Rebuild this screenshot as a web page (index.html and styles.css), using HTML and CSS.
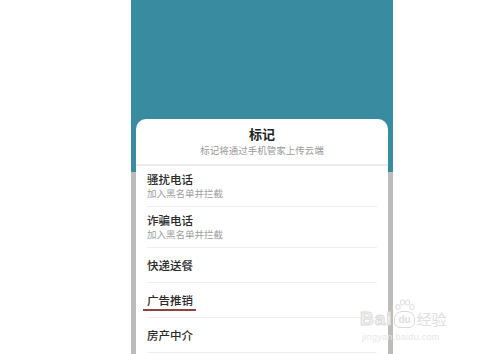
FILE: index.html
```html
<!DOCTYPE html>
<html lang="zh">
<head>
<meta charset="utf-8">
<link rel="stylesheet" href="styles.css">
</head>
<body>
<div class="page">
  <div class="phone">
    <div class="dialog">
      <div class="header">
        <div class="title">标记</div>
        <div class="subtitle">标记将通过手机管家上传云端</div>
      </div>
      <ul class="list">
        <li class="item two">
          <div class="name">骚扰电话</div>
          <div class="desc">加入黑名单并拦截</div>
        </li>
        <li class="item two">
          <div class="name">诈骗电话</div>
          <div class="desc">加入黑名单并拦截</div>
        </li>
        <li class="item one">
          <div class="name">快递送餐</div>
        </li>
        <li class="item one">
          <div class="name"><span class="marked">广告推销</span></div>
        </li>
        <li class="item one">
          <div class="name">房产中介</div>
        </li>
      </ul>
    </div>
  </div>
  <div class="watermark">
    <div class="wm-top">
      <span class="wm-bai">Bai</span>
      <span class="wm-paw">
        <svg class="wm-toes" width="22" height="12" viewBox="0 0 22 12">
          <g fill="none" stroke="#dcdcdc" stroke-width="1">
            <ellipse cx="4" cy="8" rx="2.2" ry="2.6"/>
            <ellipse cx="8.5" cy="3.5" rx="2.2" ry="2.6"/>
            <ellipse cx="13.5" cy="3.5" rx="2.2" ry="2.6"/>
            <ellipse cx="18" cy="8" rx="2.2" ry="2.6"/>
          </g>
        </svg>
        <span class="wm-du">du</span>
      </span>
      <span class="wm-cn">经验</span>
    </div>
    <div class="wm-url">jingyan.baidu.com</div>
  </div>
</div>
</body>
</html>
```
FILE: styles.css
```css
html, body {
  margin: 0;
  padding: 0;
  background: #ffffff;
  font-family: "Noto Sans CJK SC", "Noto Sans", sans-serif;
}
.page {
  position: relative;
  width: 479px;
  height: 354px;
  overflow: hidden;
}
.phone {
  margin-left: 131px;
  width: 262px;
  height: 354px;
  background: linear-gradient(to bottom, #398c9f 0, #398c9f 172px, #bcbcbc 172px, #bcbcbc 100%);
  padding-top: 119px;
  box-sizing: border-box;
  overflow: hidden;
}
.dialog {
  margin: 0 5px;
  background: #ffffff;
  border-radius: 10px 10px 0 0;
  height: 260px;
}
.header {
  padding: 6px 0 7px;
  text-align: center;
  border-bottom: 2px solid #ececec;
}
.title {
  font-size: 13px;
  line-height: 17px;
  font-weight: 700;
  color: #222;
}
.subtitle {
  margin-top: 2px;
  font-size: 9.5px;
  line-height: 13px;
  color: #9a9a9a;
}
.list {
  list-style: none;
  margin: 0;
  padding: 0;
}
.item {
  margin: 0 11px;
  border-bottom: 1px solid #efefef;
}
.item.two {
  padding: 6px 0 6px;
}
.item.one {
  padding: 10px 0 9px;
}
.name {
  font-size: 11.5px;
  line-height: 15px;
  font-weight: 500;
  color: #2a2a2a;
}
.desc {
  font-size: 9.5px;
  line-height: 13px;
  color: #a0a0a0;
}
.marked {
  position: relative;
}
.marked::after {
  content: "";
  position: absolute;
  left: -4px;
  right: -3px;
  bottom: -3px;
  height: 2px;
  background: #8a4444;
}
.watermark {
  position: absolute;
  left: 360px;
  top: 300px;
  color: #e6e6e6;
  font-family: "Liberation Sans", sans-serif;
}
.wm-top {
  display: flex;
  align-items: flex-end;
  height: 28px;
}
.wm-bai {
  font-size: 19px;
  line-height: 18px;
  font-weight: 700;
  letter-spacing: 1px;
  color: #f4f4f4;
  -webkit-text-stroke: 1px #dadada;
}
.wm-paw {
  position: relative;
  display: flex;
  flex-direction: column;
  align-items: center;
  margin-left: 1px;
}
.wm-toes {
  display: block;
}
.wm-du {
  display: block;
  font-size: 10px;
  line-height: 13px;
  font-weight: 700;
  padding: 1px 3px;
  border: 1px solid #dadada;
  border-radius: 8px 8px 6px 6px;
  color: #e0e0e0;
}
.wm-cn {
  font-family: "Noto Sans CJK SC", sans-serif;
  font-size: 15px;
  line-height: 18px;
  color: #e0e0e0;
  margin-left: 1px;
}
.wm-url {
  margin-top: 3px;
  font-size: 9px;
  line-height: 12px;
  letter-spacing: 0.3px;
  color: #e6e6e6;
  margin-left: 2px;
}
```
